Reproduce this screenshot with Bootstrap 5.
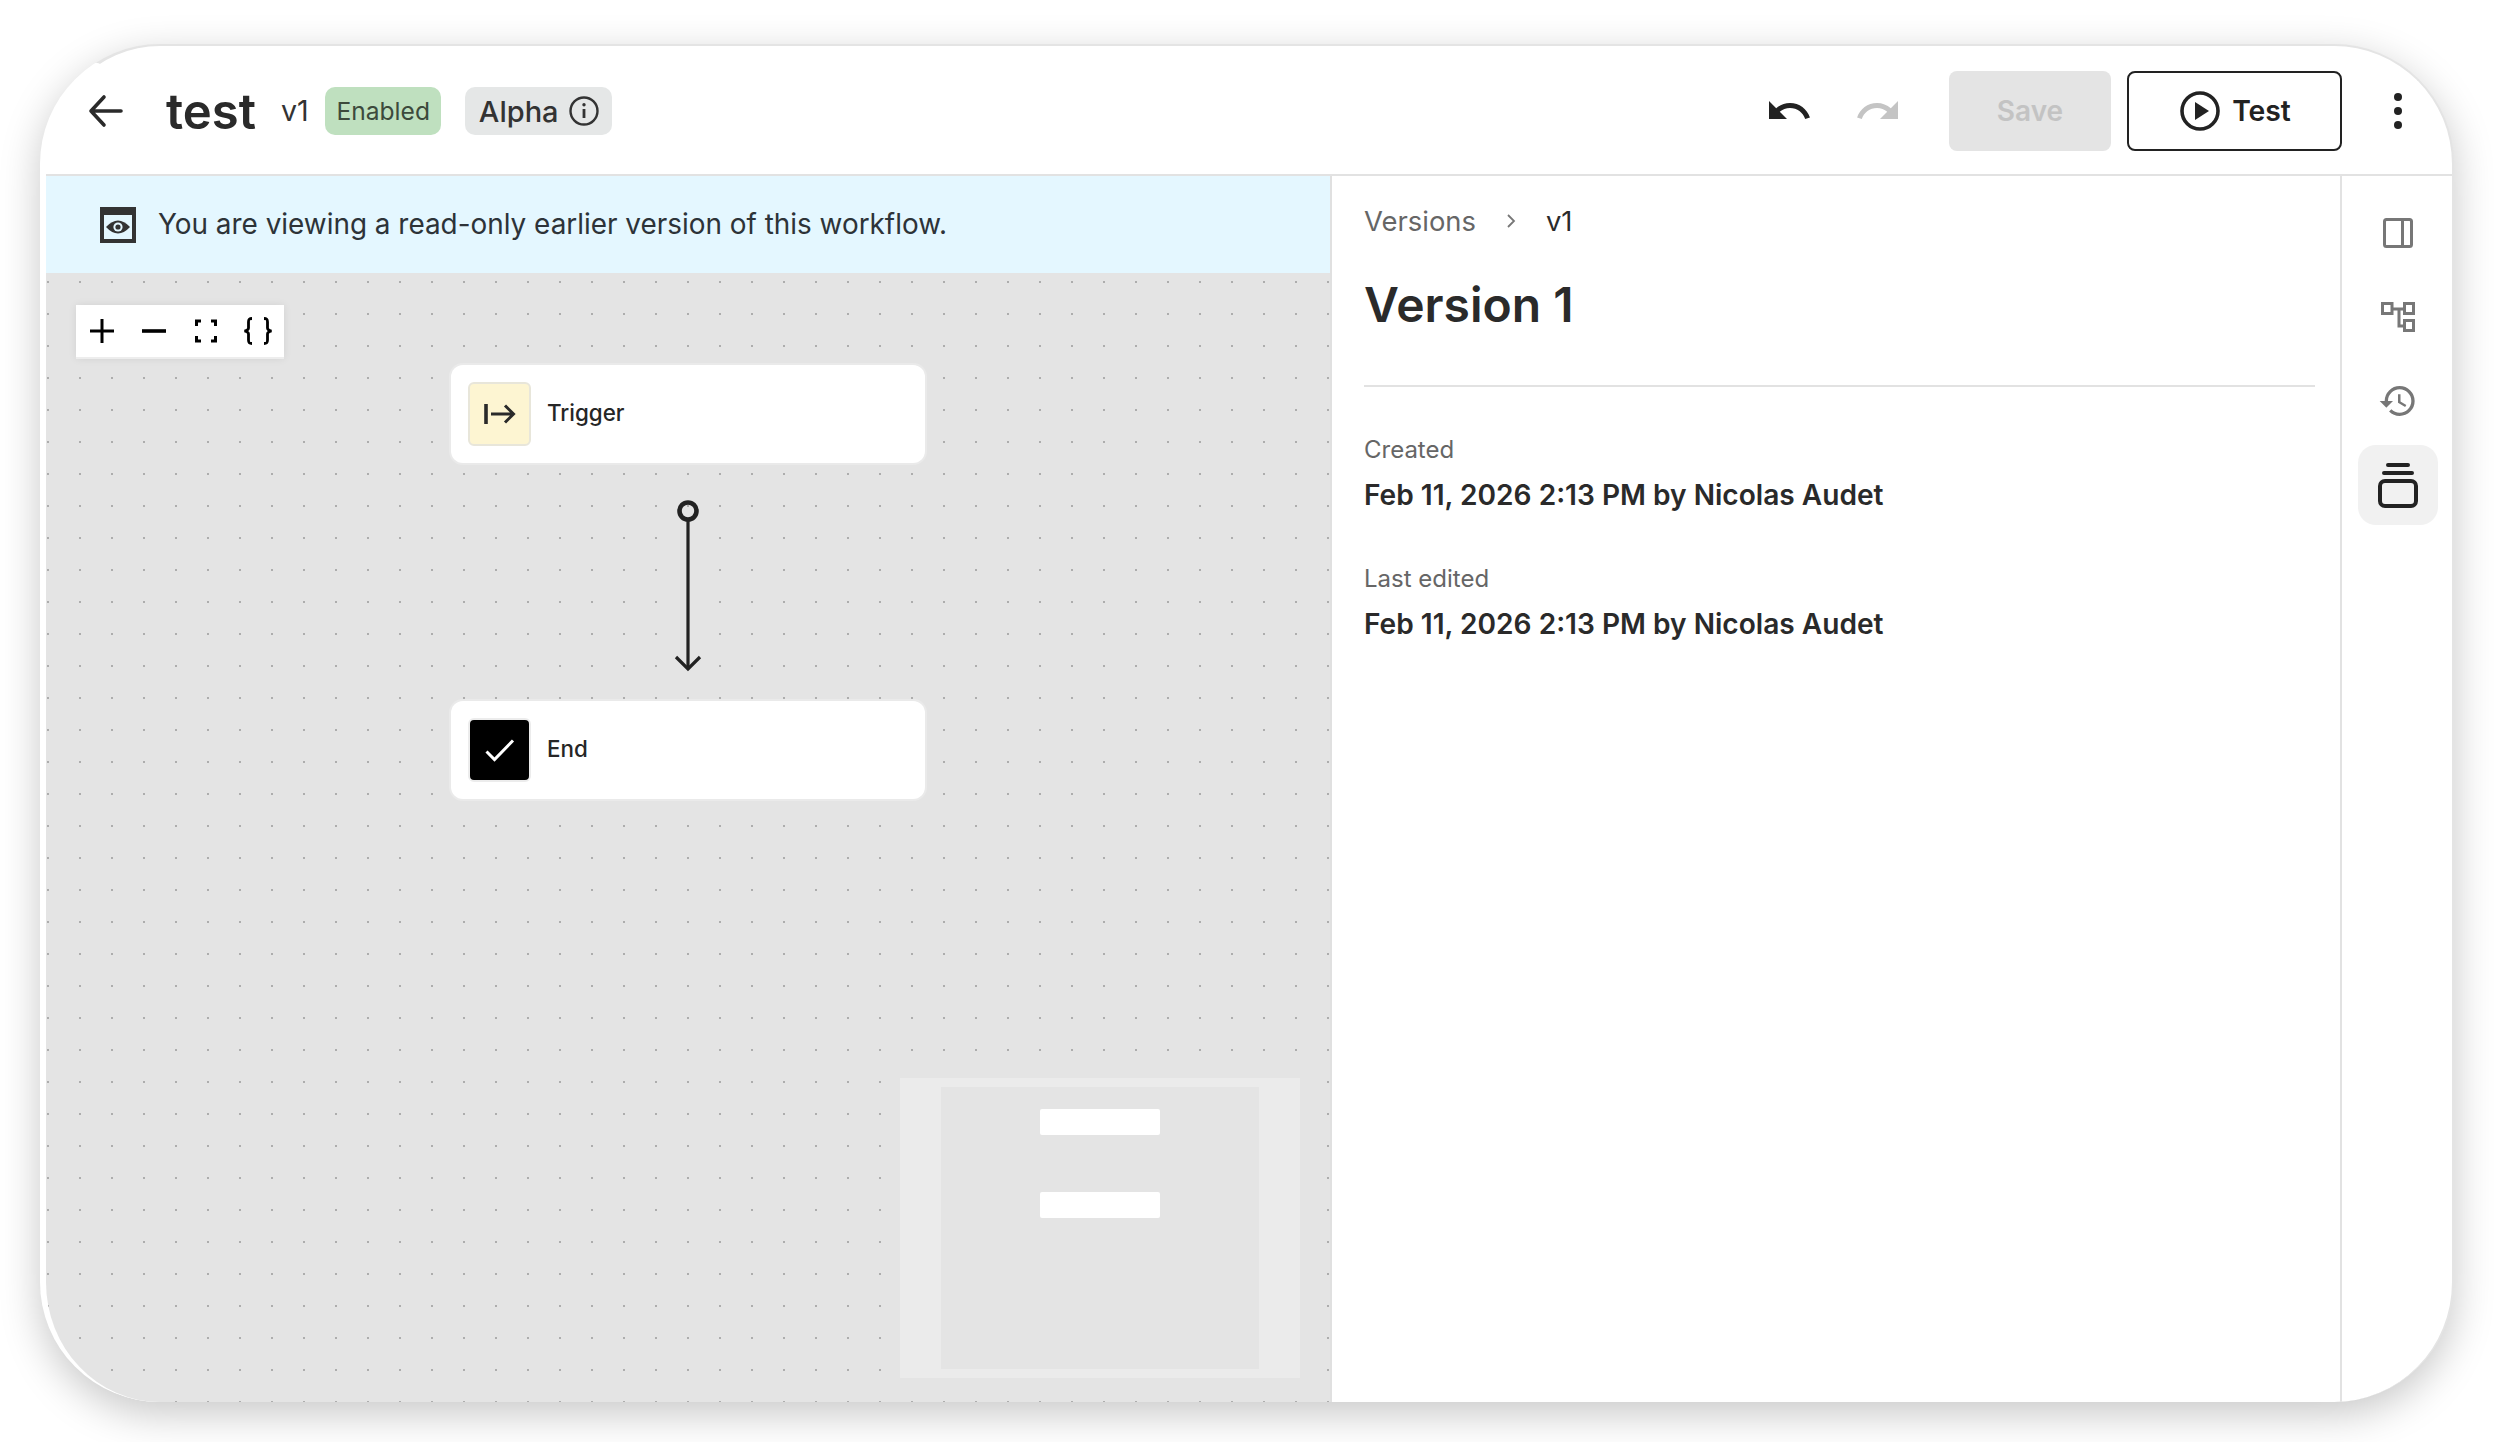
<!doctype html>
<html lang="en">
<head>
<meta charset="utf-8">
<title>test</title>
<link rel="stylesheet" href="https://cdn.jsdelivr.net/npm/bootstrap@5.3.0/dist/css/bootstrap.min.css">
<style>
html,body{height:100%;margin:0;background:#fff;font-family:Inter,"Liberation Sans",sans-serif;color:#2a2a2a;overflow:hidden}
.shell{height:1442px;padding:44px 40px 40px 40px}
.frame{height:100%;background:#fff;border-radius:120px;overflow:hidden;border-top:2px solid #e4e4e4;border-right:2px solid #e4e4e4;border-left:6px solid #fff;box-shadow:0 12px 40px rgba(0,0,0,.22)}
.topbar{height:130px;flex:none;border-bottom:2px solid #e2e2e2;padding:2px 50px 0 42px}
.back-ic{width:36px;height:36px}
.wf-name{font-size:49px;font-weight:600;line-height:1;margin:0 0 0 42px}
.wf-ver{font-size:28.6px;margin-left:25px;color:#333;line-height:1}
.tag-on,.tag-alpha{height:48px;border-radius:10px;display:inline-flex;align-items:center;justify-content:center;line-height:1}
.tag-on{background:#bfe0bf;color:#3c4a3c;font-size:24.6px;width:116px;margin-left:16.5px}
.tag-alpha{background:#e5e7e7;color:#333;font-size:29px;font-weight:500;width:147px;margin-left:24px;gap:10px}
.tool-ic{width:48px;height:48px}
.redo-ic{margin-left:41px}
.save-btn,.save-btn:disabled{width:162px;height:80px;background:#e4e4e4;border:0;border-radius:8px;color:#c3c3c3;font-size:28px;font-weight:600;opacity:1;margin-left:47px}
.test-btn{width:215px;height:80px;border:2.5px solid #222;border-radius:8px;color:#222;font-size:28.3px;font-weight:600;background:#fff;gap:12px;margin-left:16px;padding:0 0 0 2px}
.kebab{margin-left:52px;width:8px;height:36px}
.leftcol{width:1286px;flex:none;border-right:2px solid #e0e0e0}
.banner{height:97px;flex:none;background:#e4f7ff;padding:1px 0 0 54px;font-size:27.9px;color:#2d3338;gap:22px}
.board{position:relative;flex:1;background-color:#e4e4e4;background-image:radial-gradient(circle at center,#adadad 1px,transparent 1.2px);background-size:32px 32px;background-position:-14px -7px}
.zoombar{position:absolute;left:30px;top:32px;width:208px;height:54px;background:#fff;border-bottom:2px solid #ededed;box-shadow:0 0 8px rgba(0,0,0,.08)}
.zoombar span{width:52px;height:52px}
.wnode{position:absolute;left:405px;width:474px;height:98px;background:#fff;border-radius:12px;box-shadow:0 0 0 2px #eaeaea;padding:0 0 2px 17px;gap:16px;font-size:22.4px;font-weight:500;color:#262626}
.wnode.n1{top:92px}.wnode.n2{top:428px}
.nic{width:63px;height:64px;border-radius:6px;border:2px solid #e8e6da;margin-top:2px}
.nic.yel{background:#fdf5d2}
.nic.blk{background:#000;border-color:#ececec}
.wire{position:absolute;left:626px;top:227px;width:32px;height:172px}
.mini{position:absolute;left:854px;top:805px;width:400px;height:300px;background:#ebebeb;padding:9px 41px}
.mini-in{height:100%;background:#e4e4e4;padding-top:22px;gap:57px}
.mini-in i{display:block;width:120px;height:26px;background:#fff;border-radius:2px}
.sidepanel{flex:1;padding:28px 25px 0 32px;min-width:0}
.crumb{font-size:27.4px;line-height:34px;color:#666;gap:29px}
.crumb b{font-weight:400;color:#2a2a2a}
.ver-title{font-size:48px;font-weight:600;line-height:60px;margin:37px 0 0;color:#2a2a2a}
.rule{height:2px;background:#e2e2e2;margin-top:50px}
.meta-k{font-size:24px;line-height:34px;color:#666}
.meta-v{font-size:28.1px;line-height:36px;font-weight:600;margin-top:10px;color:#2a2a2a}
.meta1{margin-top:46px}.meta2{margin-top:49px}
.rail{width:112px;flex:none;border-left:2px solid #e2e2e2;padding:17px 0 0 16px;gap:4px}
.railbtn{width:80px;height:80px;border-radius:18px;padding:0;border:0}
.railbtn.on{background:#f1f1f1}
</style>
</head>
<body>
<div class="shell">
<div class="frame d-flex flex-column">
  <header class="topbar d-flex align-items-center">
    <svg class="back-ic" viewBox="0 0 36 36" fill="none" stroke="#2a2a2a" stroke-width="3.6" stroke-linecap="round" stroke-linejoin="round"><path d="M3 18H33M16 4L3 18L16 32"/></svg>
    <h1 class="wf-name">test</h1>
    <span class="wf-ver">v1</span>
    <span class="tag-on">Enabled</span>
    <span class="tag-alpha">Alpha
      <svg width="30" height="30" viewBox="0 0 30 30" fill="none" stroke="#333" stroke-width="2.4"><circle cx="15" cy="15" r="13.5"/><path d="M15 13V22" stroke-width="2.8"/><circle cx="15" cy="8.8" r="1.7" fill="#333" stroke="none"/></svg>
    </span>
    <div class="ms-auto d-flex align-items-center">
      <svg class="tool-ic" viewBox="0 0 24 24" fill="#222"><path d="M12.5 8c-2.65 0-5.05.99-6.9 2.6L2 7v9h9l-3.62-3.62c1.39-1.16 3.16-1.88 5.12-1.88 3.54 0 6.55 2.31 7.6 5.5l2.37-.78C21.08 11.03 17.15 8 12.5 8z"/></svg>
      <svg class="tool-ic redo-ic" viewBox="0 0 24 24" fill="#c4c4c4"><path d="M18.4 10.6C16.55 8.99 14.15 8 11.5 8c-4.65 0-8.58 3.03-9.96 7.22L3.9 16c1.05-3.19 4.05-5.5 7.6-5.5 1.95 0 3.73.72 5.12 1.88L13 16h9V7l-3.6 3.6z"/></svg>
      <button class="btn save-btn" disabled>Save</button>
      <button class="btn test-btn d-inline-flex align-items-center justify-content-center">
        <svg width="40" height="40" viewBox="0 0 40 40"><circle cx="20" cy="20" r="18" fill="none" stroke="#222" stroke-width="3.6"/><path d="M15 11L29 20L15 29Z" fill="#222"/></svg>Test
      </button>
      <svg class="kebab" viewBox="0 0 8 36" fill="#222"><circle cx="4" cy="4" r="4"/><circle cx="4" cy="18" r="4"/><circle cx="4" cy="32" r="4"/></svg>
    </div>
  </header>
  <main class="d-flex flex-grow-1" style="min-height:0">
    <section class="leftcol d-flex flex-column">
      <div class="banner d-flex align-items-center">
        <svg width="36" height="36" viewBox="0 0 36 36"><path fill="#333" fill-rule="evenodd" d="M0 0H36V36H0ZM4 8V32H32V8Z"/><path fill="#333" d="M6 20Q18 7 30 20Q18 33 6 20Z"/><circle cx="18" cy="20" r="4.6" fill="#e4f7ff"/><circle cx="18" cy="20" r="2.6" fill="#333"/></svg>
        <span>You are viewing a read-only earlier version of this workflow.</span>
      </div>
      <div class="board">
        <div class="zoombar d-flex">
          <span class="d-flex align-items-center justify-content-center"><svg width="26" height="26" viewBox="0 0 26 26" stroke="#000" stroke-width="3"><path d="M13 1V25M1 13H25"/></svg></span>
          <span class="d-flex align-items-center justify-content-center"><svg width="26" height="26" viewBox="0 0 26 26" stroke="#000" stroke-width="3.6"><path d="M1 13H25"/></svg></span>
          <span class="d-flex align-items-center justify-content-center"><svg width="26" height="26" viewBox="0 0 26 26" fill="none" stroke="#000" stroke-width="3"><path d="M8 3H3.5V8M18 3H22.5V8M8 23H3.5V18M18 23H22.5V18"/></svg></span>
          <span class="d-flex align-items-center justify-content-center"><svg width="30" height="28" viewBox="0 0 30 28" fill="none" stroke="#000" stroke-width="2.8"><path d="M9 1.500C5.500 1.500 5.500 3 5.500 5V11C5.500 12.500 4 13.500 1.500 14C4 14.500 5.500 15.500 5.500 17V23C5.500 25 5.500 26.500 9 26.500M21 1.500C24.500 1.500 24.500 3 24.500 5V11C24.500 12.500 26 13.500 28.500 14C26 14.500 24.500 15.500 24.500 17V23C24.500 25 24.500 26.500 21 26.500"/></svg></span>
        </div>
        <div class="wnode n1 d-flex align-items-center">
          <span class="nic yel d-flex align-items-center justify-content-center"><svg width="36" height="24" viewBox="0 0 36 24" fill="none" stroke="#2a2a2a" stroke-width="3"><path d="M4 2V22" stroke-width="3.6"/><path d="M9 12H31M23 3.500L31.500 12L23 20.500"/></svg></span>
          <span>Trigger</span>
        </div>
        <svg class="wire" viewBox="0 0 32 172" fill="none" stroke="#222"><circle cx="16" cy="11" r="8.500" stroke-width="4.600"/><path d="M16 20V168" stroke-width="3.200"/><path d="M4 157L16 169L28 157" stroke-width="3.200"/></svg>
        <div class="wnode n2 d-flex align-items-center">
          <span class="nic blk d-flex align-items-center justify-content-center"><svg width="32" height="26" viewBox="0 0 32 26" fill="none" stroke="#fff" stroke-width="3"><path d="M2.500 14.500L10.500 22.500L29 3.500"/></svg></span>
          <span>End</span>
        </div>
        <div class="mini"><div class="mini-in d-flex flex-column align-items-center"><i></i><i></i></div></div>
      </div>
    </section>
    <section class="sidepanel">
      <nav class="crumb d-flex align-items-center">
        <span>Versions</span>
        <svg width="12" height="18" viewBox="0 0 12 18" fill="none" stroke="#777" stroke-width="1.8"><path d="M3 3L9 9L3 15"/></svg>
        <b>v1</b>
      </nav>
      <h2 class="ver-title">Version 1</h2>
      <div class="rule"></div>
      <div class="meta-k meta1">Created</div>
      <div class="meta-v">Feb 11, 2026 2:13 PM by Nicolas Audet</div>
      <div class="meta-k meta2">Last edited</div>
      <div class="meta-v">Feb 11, 2026 2:13 PM by Nicolas Audet</div>
    </section>
    <aside class="rail d-flex flex-column">
      <button class="btn railbtn d-flex align-items-center justify-content-center"><svg width="30" height="30" viewBox="0 0 30 30" fill="none" stroke="#777" stroke-width="3"><rect x="1.500" y="1.500" width="27" height="27" rx="2"/><path d="M19.500 1.500V28.500"/></svg></button>
      <button class="btn railbtn d-flex align-items-center justify-content-center"><svg width="34" height="30" viewBox="0 0 34 30" fill="none" stroke="#777" stroke-width="3"><rect x="1.500" y="1.500" width="9.500" height="10"/><rect x="23.500" y="1.500" width="9" height="10"/><rect x="23.500" y="18.500" width="9" height="10"/><path d="M11 7H23.500M18 7V24H23.500"/></svg></button>
      <button class="btn railbtn d-flex align-items-center justify-content-center"><svg width="40" height="40" viewBox="0 0 24 24" fill="#777"><path d="M13 3a9 9 0 0 0-9 9H1l3.890 3.890.07.14L9 12H6c0-3.870 3.130-7 7-7s7 3.130 7 7-3.130 7-7 7c-1.930 0-3.680-.79-4.940-2.060l-1.420 1.420A8.954 8.954 0 0 0 13 21a9 9 0 0 0 0-18zm-1 5v5l4.280 2.540.72-1.210-3.500-2.080V8H12z"/></svg></button>
      <button class="btn railbtn on d-flex align-items-center justify-content-center"><svg width="40" height="46" viewBox="0 0 40 46" fill="none" stroke="#222"><path d="M10 3H30M6 11H34" stroke-width="4" stroke-linecap="round"/><rect x="2" y="19" width="36" height="25" rx="5" stroke-width="4"/></svg></button>
    </aside>
  </main>
</div>
</div>
<script src="https://cdn.jsdelivr.net/npm/bootstrap@5.3.0/dist/js/bootstrap.bundle.min.js"></script>
</body>
</html>
